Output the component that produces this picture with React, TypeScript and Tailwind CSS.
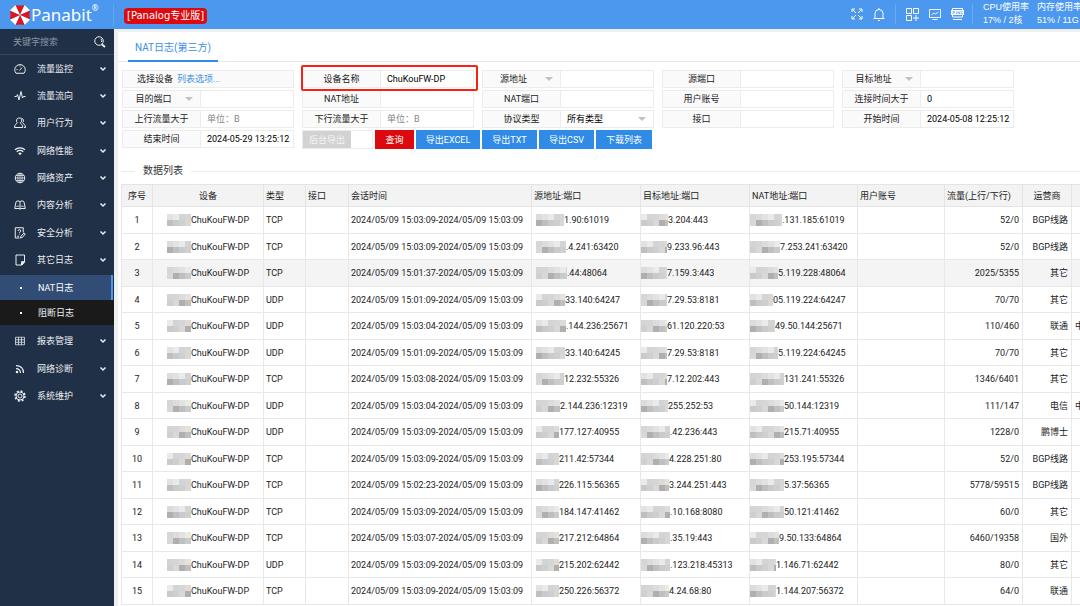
import type { ReactNode } from "react";

interface MenuItem {
  label: string;
  icon: ReactNode;
  children?: { label: string; active?: boolean }[];
}

interface LogRow {
  type: string;
  time: string;
  src: [number, string];
  dst: [number, string];
  nat: [number, string];
  traffic: string;
  isp: string;
  region?: string;
}

const MENU: MenuItem[] = [
  {
    label: "流量监控",
    icon: <path d="M4 20.500a10.500 10.500 0 1 1 16 0zM11 15l5-6M12 5v2M5 13h2" />,
  },
  { label: "流量流向", icon: <path d="M1 13h4l2-4 3 11 4-17 3 13 2-3h4" /> },
  {
    label: "用户行为",
    icon: (
      <path d="M9.500 2a4.500 5 0 0 1 3 9.500c0 2 5 3 5 9.500H1c0-6.500 5-7.500 5.500-9.500A5 5.500 0 0 1 9.500 2zM15 2.500a4.500 5 0 0 1 2 9c1 2 6 3 6 9.500h-3" />
    ),
  },
  {
    label: "网络性能",
    icon: (
      <>
        <path d="M2 9.500a15 15 0 0 1 20 0M5.500 13.500a9.500 9.500 0 0 1 13 0" strokeWidth="2.500" />
        <path d="M8.500 16.500a5 5 0 0 1 7 0L12 20.500z" fill="currentColor" stroke="none" />
      </>
    ),
  },
  {
    label: "网络资产",
    icon: (
      <>
        <circle cx="12" cy="12" r="9.500" strokeWidth="2" />
        <path d="M12 2.500v19M2.500 12h19M4 7h16M4 17h16M12 2.500c-6 5-6 14 0 19c6-5 6-14 0-19" strokeWidth="1.500" />
      </>
    ),
  },
  {
    label: "内容分析",
    icon: <path d="M12 6c-1-3-7-3-8 0L1.500 19H10l2 1.500 2-1.500h8.500L20 6c-1-3-7-3-8 0v14M5 15c2-1 4-1 5 0M19 15c-2-1-4-1-5 0" />,
  },
  {
    label: "安全分析",
    icon: <path d="M11 22H2.500V1.500h16V11M8 8q0-2.500 2.800-2.500T13.500 8q0 1.500-2.700 3v1.500M10.800 15v1M20 12l2.500 2-6 7-3.500 1 .8-3.500zM6 18.500h4" />,
  },
  {
    label: "其它日志",
    icon: (
      <>
        <path d="M4 2h17v14l-5 6H4z" strokeWidth="2" />
        <path d="M15 22v-6.500h6z" fill="currentColor" />
      </>
    ),
    children: [{ label: "NAT日志", active: true }, { label: "阻断日志" }],
  },
  { label: "报表管理", icon: <path d="M3 4.500h18v15H3zM3 9.500h18M3 14.500h18M9 4.500v15M15 4.500v15" strokeWidth="1.500" /> },
  {
    label: "网络诊断",
    icon: (
      <>
        <path d="M4 5c9 0 15 6 15 15M4 11c5 0 9 4 9 9" strokeWidth="2.500" />
        <circle cx="6" cy="18" r="2.500" fill="currentColor" stroke="none" />
      </>
    ),
  },
  {
    label: "系统维护",
    icon: (
      <>
        <circle cx="12" cy="12" r="4" />
        <circle cx="12" cy="12" r="8" />
        <circle cx="12" cy="12" r="10" strokeWidth="3" strokeDasharray="4 3.850" />
      </>
    ),
  },
];

const COLUMNS = [
  { label: "序号", col: "w-[31px]", head: "text-center" },
  { label: "设备", col: "w-[111px]", head: "text-center" },
  { label: "类型", col: "w-[42px]", head: "text-left" },
  { label: "接口", col: "w-[43px]", head: "text-left" },
  { label: "会话时间", col: "w-[183px]", head: "text-left" },
  { label: "源地址:端口", col: "w-[109px]", head: "text-left" },
  { label: "目标地址:端口", col: "w-[109px]", head: "text-left" },
  { label: "NAT地址:端口", col: "w-[108px]", head: "text-left" },
  { label: "用户账号", col: "w-[87px]", head: "text-left" },
  { label: "流量(上行/下行)", col: "w-[78px]", head: "text-left" },
  { label: "运营商", col: "w-[49px]", head: "text-center" },
  { label: "", col: "w-[80px]", head: "text-left" },
];

const END = "2024/05/09 15:03:09";

// address tuples: [masked width, visible tail]
const ROWS: LogRow[] = [
  { type: "TCP", time: "15:03:09", src: [28, "1.90:61019"], dst: [27, "3.204:443"], nat: [32, ".131.185:61019"], traffic: "52/0", isp: "BGP线路" },
  { type: "TCP", time: "15:03:09", src: [30, ".4.241:63420"], dst: [26, "9.233.96:443"], nat: [30, "7.253.241:63420"], traffic: "52/0", isp: "BGP线路" },
  { type: "TCP", time: "15:01:37", src: [31, ".44:48064"], dst: [26, "7.159.3:443"], nat: [28, "5.119.228:48064"], traffic: "2025/5355", isp: "其它" },
  { type: "UDP", time: "15:01:09", src: [29, "33.140:64247"], dst: [26, "7.29.53:8181"], nat: [23, "05.119.224:64247"], traffic: "70/70", isp: "其它" },
  { type: "UDP", time: "15:03:04", src: [30, ".144.236:25671"], dst: [26, "61.120.220:53"], nat: [25, "49.50.144:25671"], traffic: "110/460", isp: "联通", region: "中国" },
  { type: "UDP", time: "15:01:09", src: [29, "33.140:64245"], dst: [26, "7.29.53:8181"], nat: [28, "5.119.224:64245"], traffic: "70/70", isp: "其它" },
  { type: "TCP", time: "15:03:08", src: [28, "12.232:55326"], dst: [26, "7.12.202:443"], nat: [34, "131.241:55326"], traffic: "1346/6401", isp: "其它" },
  { type: "UDP", time: "15:03:04", src: [24, "2.144.236:12319"], dst: [27, "255.252:53"], nat: [34, "50.144:12319"], traffic: "111/147", isp: "电信", region: "中国" },
  { type: "UDP", time: "15:03:09", src: [23, "177.127:40955"], dst: [29, ".42.236:443"], nat: [34, "215.71:40955"], traffic: "1228/0", isp: "鹏博士" },
  { type: "TCP", time: "15:03:09", src: [23, "211.42:57344"], dst: [28, "4.228.251:80"], nat: [34, "253.195:57344"], traffic: "52/0", isp: "BGP线路" },
  { type: "TCP", time: "15:02:23", src: [23, "226.115:56365"], dst: [28, "3.244.251:443"], nat: [34, "5.37:56365"], traffic: "5778/59515", isp: "BGP线路" },
  { type: "TCP", time: "15:03:09", src: [23, "184.147:41462"], dst: [29, ".10.168:8080"], nat: [34, "50.121:41462"], traffic: "60/0", isp: "其它" },
  { type: "TCP", time: "15:03:07", src: [23, "217.212:64864"], dst: [29, ".35.19:443"], nat: [29, "9.50.133:64864"], traffic: "6460/19358", isp: "国外" },
  { type: "UDP", time: "15:03:09", src: [23, "215.202:62442"], dst: [29, ".123.218:45313"], nat: [26, "1.146.71:62442"], traffic: "80/0", isp: "其它" },
  { type: "TCP", time: "15:03:09", src: [23, "250.226:56372"], dst: [28, "4.24.68:80"], nat: [26, "1.144.207:56372"], traffic: "64/0", isp: "联通" },
];

const LIGHT = ["#e2e2e2", "#d6d6d7", "#ebeaea", "#dddcda", "#d2d4d6"];
const DARK = ["#c0bfc0", "#d0cfcf", "#b0afb0", "#c8cbce", "#d9d8d7"];

// mosaic that hides the private part of a value
function Mosaic({ width, seed }: { width: number; seed: number }) {
  const cells = [];
  for (let x = 0; x * 6 < width; x++) {
    cells.push(<rect key={`a${x}`} x={x * 6} y="0" width="6" height="6" fill={LIGHT[(seed * 3 + x * 2) % 5]} />);
    cells.push(<rect key={`b${x}`} x={x * 6} y="6" width="6" height="6" fill={DARK[(seed * 2 + x * 3) % 5]} />);
  }
  return (
    <svg width={width} height="12" className="shrink-0" aria-hidden="true" shapeRendering="crispEdges">
      {cells}
    </svg>
  );
}

function Masked({ value, seed }: { value: [number, string]; seed: number }) {
  return (
    <div className="flex items-center">
      <Mosaic width={value[0]} seed={seed} />
      <span>{value[1]}</span>
    </div>
  );
}

function Triangle() {
  return (
    <svg viewBox="0 0 8 4" className="pointer-events-none absolute right-[7px] top-1/2 h-1 w-2 -translate-y-1/2" aria-hidden="true">
      <path d="M0 0h8L4 4z" fill="#c2c2c2" />
    </svg>
  );
}

interface FieldProps {
  id: string;
  label: string;
  value?: string;
  placeholder?: string;
  pick?: boolean;
  options?: string[];
  marked?: boolean;
}

function Field({ id, label, value, placeholder, pick, options, marked }: FieldProps) {
  return (
    <div className="relative flex h-[18px] border border-[#ececec] bg-white">
      {pick ? (
        <div className="relative w-[78px] shrink-0 border-r border-[#ececec] bg-[#fafafa]">
          <select aria-label={label} className="block h-full w-full appearance-none pr-4 text-center outline-none">
            <option>{label}</option>
          </select>
          <Triangle />
        </div>
      ) : (
        <label htmlFor={id} className="flex w-[78px] shrink-0 items-center justify-center border-r border-[#ececec] bg-[#fafafa]">
          {label}
        </label>
      )}
      {options ? (
        <div className="relative min-w-0 flex-1">
          <select id={id} className="block h-full w-full appearance-none pl-1.5 text-black outline-none">
            {options.map((o) => (
              <option key={o}>{o}</option>
            ))}
          </select>
          <Triangle />
        </div>
      ) : (
        <input
          id={id}
          type="text"
          aria-label={pick ? `${label}值` : undefined}
          defaultValue={value}
          placeholder={placeholder}
          className="min-w-0 flex-1 pl-1.5 text-black outline-none placeholder:text-[#858585]"
        />
      )}
      {marked && <div className="pointer-events-none absolute -bottom-1 -left-0.5 -right-[5px] -top-1.5 z-10 rounded-xs border-2 border-[#fb2013]" />}
    </div>
  );
}

function Logo() {
  return (
    <svg viewBox="-12 -12 24 24" className="h-[22px] w-[22px]" aria-hidden="true">
      {[0, 90, 180, 270].map((a) => (
        <g key={a} transform={`rotate(${a})`}>
          <path d="M0 0L-5-11Q0-9.500 5-11z" fill="#e0141c" />
          <path d="M0 0L5-11Q8-8 11-5z" fill="#fff" />
        </g>
      ))}
    </svg>
  );
}

function Header() {
  return (
    <header className="flex h-[29px] shrink-0 items-center bg-[#4c98ef] text-white">
      <div className="flex w-[114px] shrink-0 items-center border-r border-[#62a5f1] pl-[9px]">
        <Logo />
        <span className="font-['Noto_Sans'] text-[17px] leading-5">Panabit</span>
        <span className="self-start font-['Noto_Sans'] text-[8px] leading-2">®</span>
      </div>
      <span className="ml-2.5 mt-0.5 rounded-sm bg-[#dc0a0f] px-[3px] font-['DejaVu_Sans','Noto_Sans_CJK_SC',sans-serif] text-[10px] leading-4">
        [Panalog专业版]
      </span>
      <div className="ml-auto flex shrink-0 items-center pb-px">
        <button aria-label="全屏" className="mr-2.5">
          <svg viewBox="0 0 12 12" className="h-3 w-3" fill="none" stroke="currentColor">
            <path d="M1 4V1h3M1 1l4 4M8 1h3v3M11 1L7 5M1 8v3h3M1 11l4-4M11 8v3H8M11 11L7 7" />
          </svg>
        </button>
        <button aria-label="消息">
          <svg viewBox="0 0 12 13" className="h-[13px] w-3" fill="none" stroke="currentColor">
            <path d="M.5 10.500h11M2 10.500V5.500a4 4 0 0 1 8 0v5M6 0v1.500M5 12.500h2" />
          </svg>
        </button>
        <div className="mx-2.5 h-5 w-px bg-[#6aaaf3]" />
        <button aria-label="应用" className="mr-2.5">
          <svg viewBox="0 0 13 13" className="h-[13px] w-[13px]" fill="none" stroke="currentColor">
            <path d="M.5.500h5v5h-5zM7.500.500h5v5h-5zM.5 7.500h5v5h-5zM10 7v6M7 10h6" />
          </svg>
        </button>
        <button aria-label="监控" className="mr-2.5">
          <svg viewBox="0 0 12 11" className="h-[11px] w-3" fill="none" stroke="currentColor">
            <path d="M.5.500h11v8H.5zM3.500 10.500h5M2.500 6L5 4l1.500 1L9.500 3" strokeWidth=".9" />
          </svg>
        </button>
        <button aria-label="Ping">
          <svg viewBox="0 0 13 12" className="h-3 w-[13px]" fill="none" stroke="currentColor">
            <path d="M1.500.500h10v8.500h-10zM2 11.500h9" />
            <path d="M0 2h13v5H0z" fill="currentColor" stroke="none" />
            <path d="M2 6V3.500h1.500v1.500H2M5.500 3.500V6M7 6V3.500l1.500 2.500V3.500M11.500 3.500H10V6h1.500V5" stroke="#4c98ef" strokeWidth=".6" />
          </svg>
        </button>
        <div className="ml-2 mr-2.5 h-5 w-px bg-[#6aaaf3]" />
        <dl className="flex w-[97px] gap-2 overflow-hidden whitespace-nowrap font-['Liberation_Sans','Noto_Sans_CJK_SC',sans-serif] leading-[13px]">
          <div className="shrink-0">
            <dt>CPU使用率</dt>
            <dd>17% / 2核</dd>
          </div>
          <div className="shrink-0">
            <dt>内存使用率</dt>
            <dd>51% / 11G</dd>
          </div>
        </dl>
      </div>
    </header>
  );
}

function Sidebar() {
  return (
    <aside className="w-[114px] shrink-0 overflow-hidden bg-[#203047] text-[#eceff2]">
      <div className="flex h-[26px] items-center border-b border-[#37465a] pl-[13px] pr-2">
        <input type="search" aria-label="搜索" placeholder="关键字搜索" className="min-w-0 flex-1 outline-none placeholder:text-[#8a94a2]" />
        <svg viewBox="0 0 24 24" className="h-3 w-3 shrink-0" fill="none" stroke="currentColor" strokeWidth="2" aria-hidden="true">
          <circle cx="10" cy="10" r="8.500" />
          <path d="M14 6a6 6 0 0 1 1 6" />
          <path d="M16 17l6 5" strokeWidth="4" />
        </svg>
      </div>
      <nav>
        <ul>
          {MENU.map((item) => (
            <li key={item.label} className="group">
              <a href="#" className="flex h-[27px] items-center pl-3.5 pr-[7px] group-nth-[3n]:h-7">
                <svg
                  viewBox="0 0 24 24"
                  className="h-3 w-3"
                  fill="none"
                  stroke="currentColor"
                  strokeWidth="2"
                  strokeLinejoin="round"
                  aria-hidden="true"
                >
                  {item.icon}
                </svg>
                <span className="ml-[11px]">{item.label}</span>
                <svg viewBox="0 0 8 6" className="ml-auto h-1.5 w-2" fill="none" stroke="currentColor" strokeWidth="1.500" aria-hidden="true">
                  <path d="M1.500 1.500L4 4l2.500-2.500" />
                </svg>
              </a>
              {item.children && (
                <ul className="my-0.5">
                  {item.children.map((child) => (
                    <li key={child.label}>
                      <a
                        href="#"
                        className={`flex h-[25px] items-center pl-5 ${
                          child.active ? "mr-px border-r-2 border-[#4c98ef] bg-[#324d75] text-white" : "bg-[#1a1a1a]"
                        }`}
                      >
                        <span className="h-0.5 w-0.5 bg-white" />
                        <span className="ml-4">{child.label}</span>
                      </a>
                    </li>
                  ))}
                </ul>
              )}
            </li>
          ))}
        </ul>
      </nav>
    </aside>
  );
}

function Filters() {
  return (
    <form className="grid grid-cols-[repeat(auto-fill,172px)] gap-x-2 gap-y-0.5 px-1 pt-2" onSubmit={(e) => e.preventDefault()}>
      <div className="flex h-[18px] items-center border border-[#ececec] bg-[#fafafa] pl-3.5">
        <span>选择设备</span>
        <a href="#" className="ml-1 text-[#3b8fe6]">
          列表选项...
        </a>
      </div>
      <Field id="device" label="设备名称" value="ChuKouFW-DP" marked />
      <Field id="src" label="源地址" pick />
      <Field id="sport" label="源端口" />
      <Field id="dst" label="目标地址" pick />
      <Field id="dport" label="目的端口" pick />
      <Field id="nataddr" label="NAT地址" />
      <Field id="natport" label="NAT端口" />
      <Field id="user" label="用户账号" />
      <Field id="duration" label="连接时间大于" value="0" />
      <Field id="up" label="上行流量大于" placeholder="单位：B" />
      <Field id="down" label="下行流量大于" placeholder="单位：B" />
      <Field id="proto" label="协议类型" options={["所有类型", "TCP", "UDP"]} />
      <Field id="iface" label="接口" />
      <Field id="start" label="开始时间" value="2024-05-08 12:25:12" />
      <Field id="end" label="结束时间" value="2024-05-29 13:25:12" />
      <div className="col-span-3 flex h-[19px] gap-0.5 text-white">
        <div className="flex w-[71px] border border-[#ececec]">
          <button type="button" className="w-12 bg-[#d2d2d2] text-[#f5f5f5]">
            后台导出
          </button>
        </div>
        <button type="submit" className="w-[39px] bg-[#dc0a0f]">
          查询
        </button>
        <button type="button" className="w-16 bg-[#2f8be6]">
          导出EXCEL
        </button>
        <button type="button" className="w-[55px] bg-[#2f8be6]">
          导出TXT
        </button>
        <button type="button" className="w-[55px] bg-[#2f8be6]">
          导出CSV
        </button>
        <button type="button" className="w-14 bg-[#2f8be6]">
          下载列表
        </button>
      </div>
    </form>
  );
}

function LogTable() {
  return (
    <div className="overflow-hidden pl-[3px]">
      <table className="w-[1031px] table-fixed border-collapse whitespace-nowrap text-[#222]">
        <thead>
          <tr className="h-[22px] bg-[#f3f3f3]">
            {COLUMNS.map((c, i) => (
              <th key={i} className={`border border-[#e4e4e4] px-0.5 font-normal ${c.col} ${c.head}`}>
                {c.label}
              </th>
            ))}
          </tr>
        </thead>
        <tbody>
          {ROWS.map((row, i) => (
            <tr key={i} className={`odd:h-[27px] even:h-[26px] *:border *:border-[#e8e8e8] ${i === 2 ? "bg-[#f4f4f4]" : ""}`}>
              <td className="text-center">{i + 1}</td>
              <td>
                <div className="flex items-center pl-3.5">
                  <Mosaic width={24} seed={i} />
                  <span>ChuKouFW-DP</span>
                </div>
              </td>
              <td className="pl-0.5">{row.type}</td>
              <td />
              <td className="pl-0.5">
                2024/05/09 {row.time}-{END}
              </td>
              <td className="pl-1">
                <Masked value={row.src} seed={i + 1} />
              </td>
              <td>
                <Masked value={row.dst} seed={i + 4} />
              </td>
              <td>
                <Masked value={row.nat} seed={i + 7} />
              </td>
              <td />
              <td className="pr-[3px] text-right">{row.traffic}</td>
              <td className="pr-[3px] text-right">{row.isp}</td>
              <td className="pl-[3px]">{row.region}</td>
            </tr>
          ))}
        </tbody>
      </table>
    </div>
  );
}

export default function App() {
  return (
    <div className="flex h-screen flex-col overflow-hidden bg-[#f0f0f1] font-[Roboto,'Noto_Sans_CJK_SC',sans-serif] text-[9px] leading-3 text-[#222]">
      <Header />
      <div className="flex min-h-0 flex-1">
        <Sidebar />
        <main className="ml-1 mt-[3px] min-w-0 flex-1 overflow-hidden bg-white">
          <div className="flex h-[30px] border-b border-[#e8e8e8] pl-2.5">
            <a href="#" className="flex h-[30px] items-center border-b-2 border-[#2f8be6] px-[7px] pt-1 text-[10px] text-[#3b8fe6]">
              NAT日志(第三方)
            </a>
          </div>
          <Filters />
          <h2 className="mb-[5px] mt-3.5 flex items-center gap-2 pl-[3px] text-[10px] leading-4 text-[#333]">
            <span className="h-px w-3.5 bg-[#ececec]" />
            数据列表
            <span className="h-px flex-1 bg-[#ececec]" />
          </h2>
          <LogTable />
        </main>
      </div>
    </div>
  );
}
